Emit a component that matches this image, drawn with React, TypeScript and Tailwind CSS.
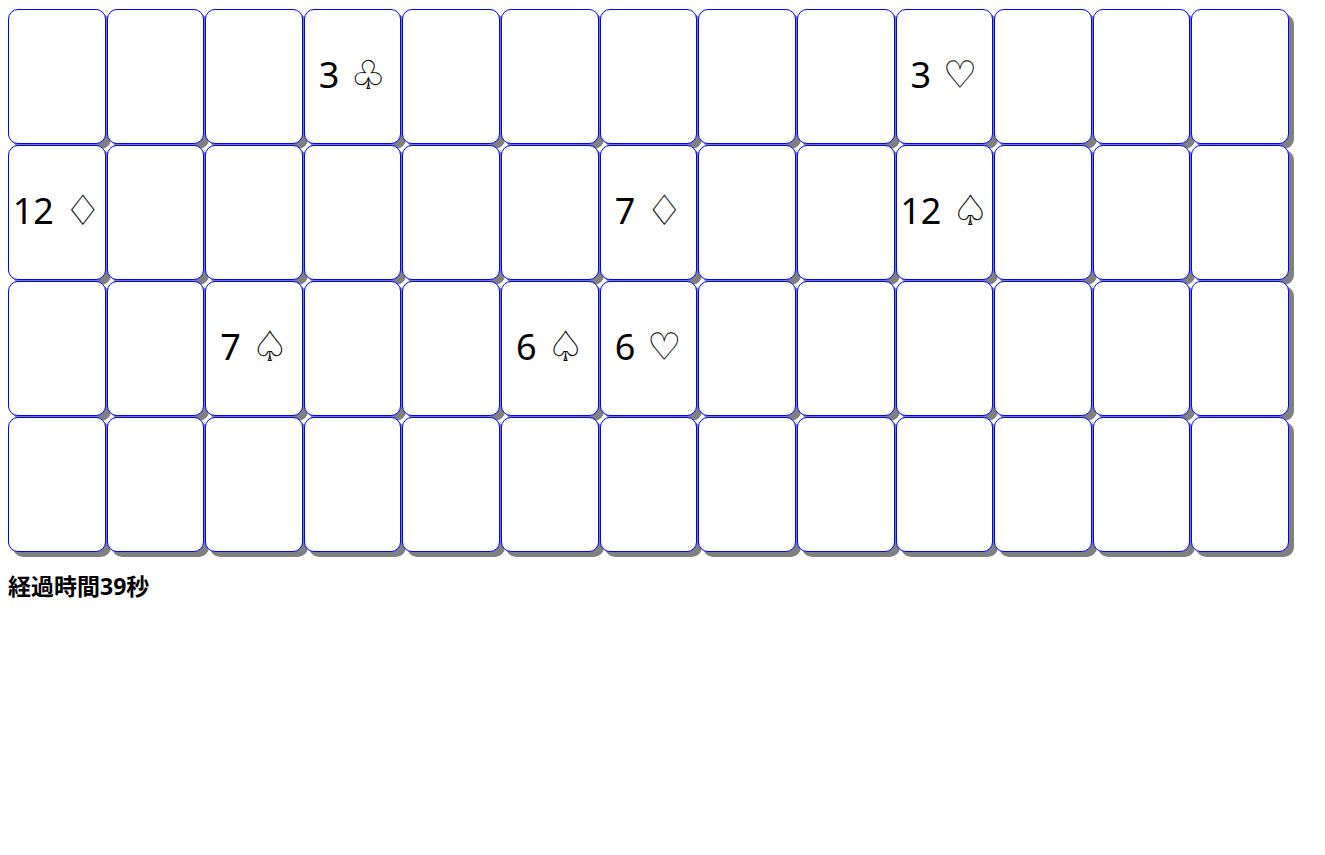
import { useState } from "react";

type Suit = "♧" | "♡" | "♢" | "♤";
type Card = { rank: number; suit: Suit };

const COLUMNS = 13;
const ROWS = 4;

const suitSize: Record<Suit, string> = {
  "♧": "text-[40px]",
  "♡": "text-[38px]",
  "♢": "text-[42px]",
  "♤": "text-[42px]",
};

const faceUp: Record<string, Card> = {
  "0-3": { rank: 3, suit: "♧" },
  "0-9": { rank: 3, suit: "♡" },
  "1-0": { rank: 12, suit: "♢" },
  "1-6": { rank: 7, suit: "♢" },
  "1-9": { rank: 12, suit: "♤" },
  "2-2": { rank: 7, suit: "♤" },
  "2-5": { rank: 6, suit: "♤" },
  "2-6": { rank: 6, suit: "♡" },
};

function PlayingCard({ card }: { card?: Card }) {
  return (
    <button
      type="button"
      aria-label={card ? undefined : "裏向きのカード"}
      className="flex h-[135px] min-w-0 items-center justify-center gap-[11px] rounded-[10px] border border-[#0000ff] bg-white pb-1 font-['Noto_Sans',sans-serif] text-4xl whitespace-nowrap text-black shadow-[5px_5px_#808080]"
    >
      {card && (
        <>
          <span>{card.rank}</span>
          <span className="flex w-9 justify-center font-['DejaVu_Sans',sans-serif]">
            <span className={`${suitSize[card.suit]} leading-10`}>{card.suit}</span>
          </span>
        </>
      )}
    </button>
  );
}

export default function App() {
  const [seconds] = useState(39);
  return (
    <main className="min-h-screen bg-white pt-[9px] pr-9 pl-2">
      <div className="grid grid-cols-13 gap-px">
        {Array.from({ length: ROWS * COLUMNS }, (_, i) => (
          <PlayingCard
            key={i}
            card={faceUp[`${Math.floor(i / COLUMNS)}-${i % COLUMNS}`]}
          />
        ))}
      </div>
      <p className="mt-[18px] font-['Noto_Sans','Noto_Sans_CJK_JP',sans-serif] text-[23px] leading-8 font-bold text-black">
        経過時間{seconds}秒
      </p>
    </main>
  );
}
